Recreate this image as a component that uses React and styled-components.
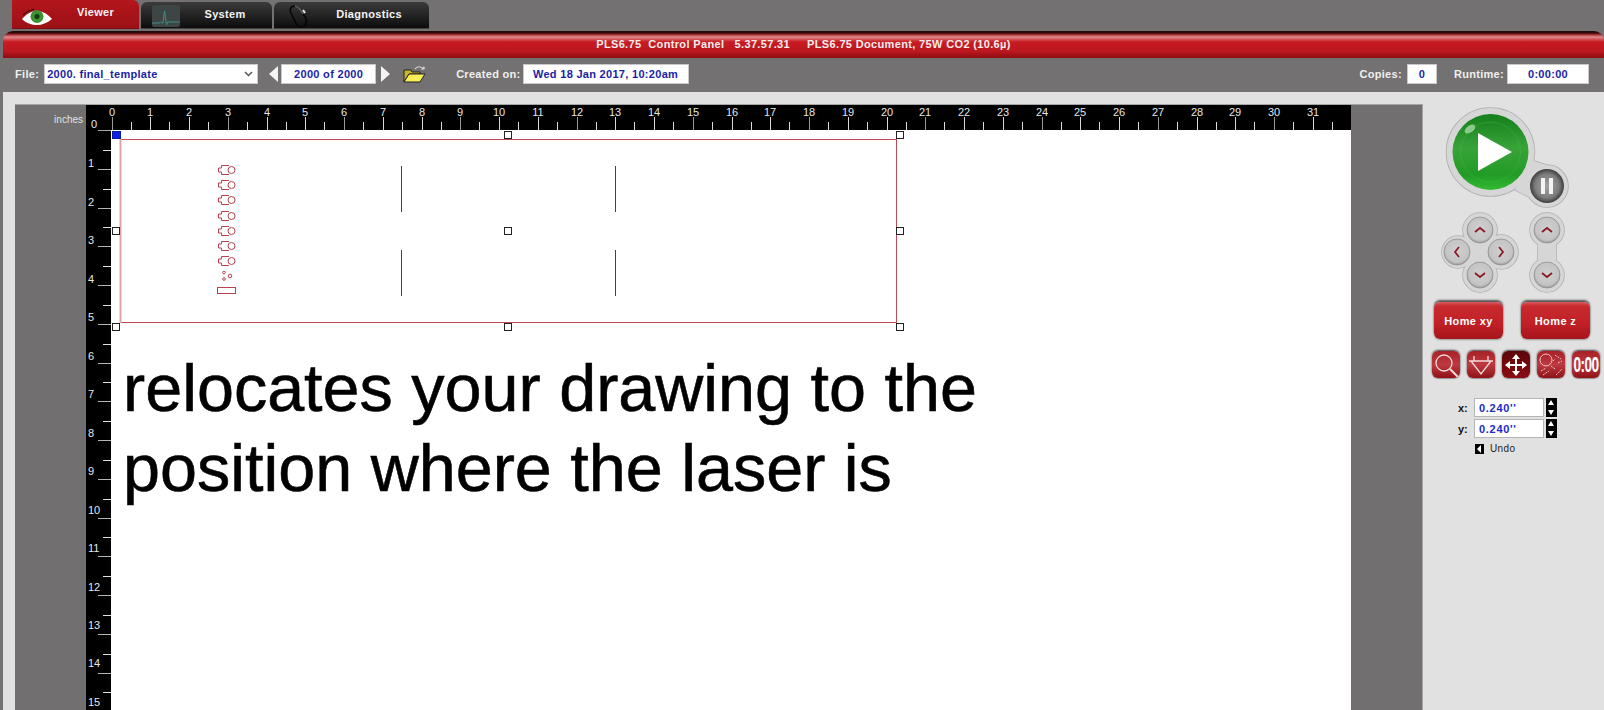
import React from "react";
import styled, { createGlobalStyle } from "styled-components";

const INCH = 38.75;

const GlobalStyle = createGlobalStyle`
  html, body {
    margin: 0;
    padding: 0;
    background: #737171;
    overflow: hidden;
  }
  * {
    box-sizing: border-box;
  }
`;

export default function App() {
  return (
    <Page>
      <GlobalStyle />
      <TabBar>
        <Tab $active $w={127}>
          <EyeIcon />
          <TabLabel $active $left={40}>Viewer</TabLabel>
        </Tab>
        <Tab $w={131}>
          <MonitorIcon />
          <TabLabel $left={37}>System</TabLabel>
        </Tab>
        <Tab $w={155}>
          <StethoscopeIcon />
          <TabLabel $left={35}>Diagnostics</TabLabel>
        </Tab>
      </TabBar>
      <TitleBar>PLS6.75&nbsp; Control Panel&nbsp;&nbsp; 5.37.57.31&nbsp;&nbsp;&nbsp;&nbsp; PLS6.75 Document, 75W CO2 (10.6µ)</TitleBar>
      <ToolBar>
        <FieldLabel>File:</FieldLabel>
        <SelectBox>
          <span>2000. final_template</span>
          <svg width="9" height="6" viewBox="0 0 9 6">
            <path d="M1 1l3.500 3.500L8 1" fill="none" stroke="#555" strokeWidth="1.500" />
          </svg>
        </SelectBox>
        <Arrow $left $gap={11} />
        <ValueBox $w={95} $gap={3}>2000 of 2000</ValueBox>
        <Arrow $gap={5} />
        <FolderIcon />
        <FieldLabel $gap={30}>Created on:</FieldLabel>
        <ValueBox $w={166} $gap={2}>Wed 18 Jan 2017, 10:20am</ValueBox>
        <Spacer />
        <FieldLabel>Copies:</FieldLabel>
        <ValueBox $w={30} $gap={5}>0</ValueBox>
        <FieldLabel $gap={17}>Runtime:</FieldLabel>
        <ValueBox $w={82} $gap={3}>0:00:00</ValueBox>
      </ToolBar>
      <Workspace>
        <CanvasFrame>
          <Gutter>inches</Gutter>
          <RulerGrid>
            <TopRuler />
            <SheetRow>
              <LeftRuler />
              <Sheet>
                <Drawing />
                <Caption>
                  relocates your drawing to the
                  <br />
                  position where the laser is
                </Caption>
              </Sheet>
            </SheetRow>
          </RulerGrid>
        </CanvasFrame>
        <SidePanel>
          <MotionControls />
          <HomeRow>
            <HomeButton>Home xy</HomeButton>
            <HomeButton>Home z</HomeButton>
          </HomeRow>
          <ToolRow>
            <ToolButton>
              <svg width="26" height="26" viewBox="0 0 26 26" fill="none" stroke="#f3dcdc" strokeWidth="1.300">
                <circle cx="11" cy="11" r="8" />
                <path d="M17 17l8 8" strokeWidth="2" />
              </svg>
            </ToolButton>
            <ToolButton>
              <svg width="26" height="26" viewBox="0 0 26 26" fill="none" stroke="#f3dcdc" strokeWidth="1.300">
                <path d="M1 9h24M6 9V4M20 9V4M3 9l10 13L23 9" />
              </svg>
            </ToolButton>
            <ToolButton $active>
              <svg width="24" height="24" viewBox="0 0 24 24" fill="#fff">
                <path d="M12 1l4 5h-3v5h5V8l5 4-5 4v-3h-5v5h3l-4 5-4-5h3v-5H6v3l-5-4 5-4v3h5V6H8z" />
              </svg>
            </ToolButton>
            <ToolButton>
              <svg width="26" height="26" viewBox="0 0 26 26" fill="none" stroke="#ecc6c6" strokeWidth="1">
                <circle cx="8" cy="8" r="6" />
                <path d="M17 3l6 4M20 11l4-2M3 19l5-3M5 23l6-4M13 14l4 3M18 23l6-6M15 9l2-2" strokeDasharray="2 1" />
              </svg>
            </ToolButton>
            <ToolButton><TimerText>0:00</TimerText></ToolButton>
          </ToolRow>
          <CoordRow $gap={20}>
            <CoordLabel>x:</CoordLabel>
            <CoordInput>0.240''</CoordInput>
            <Spinner />
          </CoordRow>
          <CoordRow $gap={2}>
            <CoordLabel>y:</CoordLabel>
            <CoordInput>0.240''</CoordInput>
            <Spinner />
          </CoordRow>
          <UndoRow>
            <UndoMark />
            Undo
          </UndoRow>
        </SidePanel>
      </Workspace>
    </Page>
  );
}

function EyeIcon() {
  return (
    <TabIcon $left={9} $top={8}>
      <svg width="32" height="18" viewBox="0 0 32 18">
        <path d="M1 11C7 4 12 3 16 3s10 2 15 8c-5 4-10 6-15 6S5 15 1 11z" fill="#fff" />
        <circle cx="16" cy="8.500" r="6.500" fill="#3f8f33" />
        <circle cx="16" cy="8.500" r="2.500" fill="#123d12" />
        <path d="M2 7l4-3M6 4l3-2M9 3l4-2" stroke="#2a0505" strokeWidth="1" />
      </svg>
    </TabIcon>
  );
}

function MonitorIcon() {
  return (
    <TabIcon $left={11} $top={3}>
      <svg width="28" height="22" viewBox="0 0 28 22">
        <rect width="28" height="22" rx="2" fill="#3d4644" />
        <path d="M0 18h7l1.500-1 1.500 1h1l1.500-12 2 14 1-3h12.500" fill="none" stroke="#3f8f88" strokeWidth="1" />
      </svg>
    </TabIcon>
  );
}

function StethoscopeIcon() {
  return (
    <TabIcon $left={14} $top={3}>
      <svg width="20" height="24" viewBox="0 0 20 24" fill="none" stroke="#050505" strokeWidth="1.500">
        <path d="M7 1C3 1 1 4 3 8l6 12c2 3 7 3 9-1 1-3 0-7-3-10" />
        <path d="M7 1c4 1 6 4 8 8" stroke="#5a5a5a" />
        <path d="M15 5l2 3" stroke="#e8e8e8" strokeWidth="2" />
      </svg>
    </TabIcon>
  );
}

function FolderIcon() {
  return (
    <FolderWrap>
      <svg width="23" height="18" viewBox="0 0 23 18">
        <path d="M1 5h7l1 2h8v2H6L1 17z" fill="#c9b52a" stroke="#222" strokeWidth="1" />
        <path d="M1 17L6 9h16l-5 8z" fill="#f8ee55" stroke="#222" strokeWidth="1" />
        <path d="M12 4c2-3 6-3 8 0" fill="none" stroke="#ddd" strokeWidth="1.200" />
        <path d="M18 5l4-1-1-3z" fill="#ddd" />
      </svg>
    </FolderWrap>
  );
}

function TopRuler() {
  const ticks = [];
  for (let i = 0; i <= 32; i++) {
    const x = Math.round(111.7 + i * INCH);
    ticks.push(
      <g key={i}>
        {i < 32 && (
          <text x={x} y={116} textAnchor="middle" fill="#e6e6e6" fontSize="11" fontFamily="Liberation Sans, sans-serif">
            {i}
          </text>
        )}
        <line x1={x + 0.5} x2={x + 0.5} y1={117} y2={130} stroke={i % 3 ? "#d8d8d8" : "#9a9a9a"} />
        <line
          x1={Math.round(x + INCH / 2) + 0.5}
          x2={Math.round(x + INCH / 2) + 0.5}
          y1={122}
          y2={130}
          stroke="#dcdcdc"
        />
      </g>
    );
  }
  return (
    <RulerSvg width="1265" height="25" viewBox="86 105 1265 25">
      <rect x="86" y="105" width="1265" height="25" fill="#000" />
      {ticks}
      <text x="91" y="128" fill="#e6e6e6" fontSize="11" fontFamily="Liberation Sans, sans-serif">0</text>
    </RulerSvg>
  );
}

function LeftRuler() {
  const ticks = [];
  ticks.push(<line key="zero" x1="98" x2="111" y1="130.500" y2="130.500" stroke="#aaa" />);
  for (let i = 1; i <= 15; i++) {
    const y = Math.round(130 + i * INCH);
    ticks.push(
      <g key={i}>
        <text x={88} y={Math.round(129 + i * 38.46)} fill="#e6e6e6" fontSize="11" fontFamily="Liberation Sans, sans-serif">
          {i}
        </text>
        {i < 15 && <line x1="98" x2="111" y1={y + 0.5} y2={y + 0.5} stroke="#b5b5b5" />}
        <line x1="103" x2="111" y1={Math.round(y - INCH / 2) + 0.5} y2={Math.round(y - INCH / 2) + 0.5} stroke="#e0e0e0" />
      </g>
    );
  }
  return (
    <RulerSvg width="25" height="580" viewBox="86 130 25 580">
      <rect x="86" y="130" width="25" height="580" fill="#000" />
      {ticks}
    </RulerSvg>
  );
}

const handleSpots = [
  [508, 135],
  [900, 135],
  [116, 231],
  [508, 231],
  [900, 231],
  [116, 327],
  [508, 327],
  [900, 327],
];

const partRows = [170, 185, 200, 216, 231, 246, 261];

function Drawing() {
  return (
    <DrawingSvg width="800" height="205" viewBox="111 130 800 205">
      <rect x="120.500" y="139.500" width="776" height="183" fill="none" stroke="#c04a55" />
      <line x1="120.500" x2="120.500" y1="139" y2="323" stroke="#dba6aa" strokeWidth="2" />
      {[401.5, 615.5].map((x) => (
        <g key={x} stroke="#2f3da0">
          <line x1={x} x2={x} y1="166" y2="212" />
          <line x1={x} x2={x} y1="250" y2="296" />
        </g>
      ))}
      {partRows.map((y) => (
        <g key={y} fill="none" stroke="#b8434e" transform={`translate(0 ${y})`}>
          <path d="M229-4.500h-7.500v2.500h-3v4h3v2.500h7.500" />
          <circle cx="231.500" cy="0" r="3.500" />
        </g>
      ))}
      <g fill="none" stroke="#b8434e">
        <circle cx="224" cy="272.500" r="1.300" />
        <circle cx="224" cy="279" r="1.300" />
        <circle cx="230" cy="276" r="1.800" />
        <rect x="217.500" y="287.500" width="18" height="6" />
      </g>
      <rect x="112.500" y="131.500" width="8" height="7" fill="#0c20e8" stroke="#0b1a9a" />
      {handleSpots.map(([x, y]) => (
        <rect key={`${x}-${y}`} x={x - 3.5} y={y - 3.5} width="7" height="7" fill="#fff" stroke="#222" />
      ))}
    </DrawingSvg>
  );
}

function MotionButton({ x, y, d }) {
  return (
    <g>
      <circle cx={x} cy={y} r="13" fill="url(#steel)" stroke="#8f8f8f" strokeWidth="0.800" />
      <path d={`M${x} ${y}${d}`} fill="none" stroke="#8a1c26" strokeWidth="1.800" />
    </g>
  );
}

const UP = "m-5 2l5-4 5 4";
const DOWN = "m-5-2l5 4 5-4";
const LEFT = "m2-5l-4 5 4 5";
const RIGHT = "m-2-5l4 5-4 5";

// halo shapes behind the buttons, drawn twice to get one outer edge
function Halos(props) {
  return (
    <g {...props}>
      <circle cx="1490.500" cy="152" r="44" />
      <circle cx="1547" cy="186" r="21" />
      <path d="M1530 160l17 5-12 35-20-10z" />
      <path d="M1480 232l21 20-21 23-23-23z" />
      <circle cx="1480" cy="230" r="17" />
      <circle cx="1480" cy="275" r="17" />
      <circle cx="1458" cy="252" r="16" />
      <circle cx="1501" cy="252" r="17" />
      <path d="M1538 235h18v35h-18z" />
      <circle cx="1547" cy="230" r="17" />
      <circle cx="1547" cy="275" r="17" />
    </g>
  );
}

function MotionControls() {
  return (
    <MotionSvg width="181" height="190" viewBox="1423 104 181 190">
      <defs>
        <linearGradient id="ball" x1="0" y1="0" x2="0" y2="1">
          <stop offset="0" stopColor="#157f1c" />
          <stop offset="0.45" stopColor="#38a338" />
          <stop offset="0.8" stopColor="#229b26" />
          <stop offset="1" stopColor="#33bb33" />
        </linearGradient>
        <radialGradient id="steel" cx="50%" cy="45%" r="55%">
          <stop offset="0" stopColor="#d0d0d0" />
          <stop offset="0.8" stopColor="#c4c4c4" />
          <stop offset="1" stopColor="#9a9a9a" />
        </radialGradient>
        <radialGradient id="pause" cx="50%" cy="50%" r="50%">
          <stop offset="0" stopColor="#a4a4a4" />
          <stop offset="0.7" stopColor="#7d7d7d" />
          <stop offset="1" stopColor="#3e3e3e" />
        </radialGradient>
      </defs>
      <Halos fill="#b0b0b0" stroke="#b0b0b0" strokeWidth="1.500" />
      <Halos fill="#d6d6d6" />
      <circle cx="1490.500" cy="152" r="38" fill="url(#ball)" />
      <ellipse cx="1470" cy="129" rx="6" ry="3.500" fill="#a9d9a6" opacity="0.8" transform="rotate(-35 1470 129)" />
      <circle cx="1490.500" cy="152" r="30" fill="none" stroke="#52c052" strokeWidth="0.600" opacity="0.5" />
      <path d="M1478 133l34 19-34 19z" fill="#fff" />
      <circle cx="1547" cy="186" r="17" fill="url(#pause)" />
      <path d="M1541 178h4v16h-4zM1549 178h4v16h-4z" fill="#f4f4f4" />
      <MotionButton x={1480} y={230} d={UP} />
      <MotionButton x={1457} y={252} d={LEFT} />
      <MotionButton x={1501} y={252} d={RIGHT} />
      <MotionButton x={1480} y={275} d={DOWN} />
      <MotionButton x={1547} y={230} d={UP} />
      <MotionButton x={1547} y={275} d={DOWN} />
    </MotionSvg>
  );
}

const Page = styled.div`
  width: 1604px;
  height: 710px;
  display: flex;
  flex-direction: column;
  overflow: hidden;
  background: #737171;
  font-family: "Liberation Sans", Arial, sans-serif;
`;

const TabBar = styled.div`
  height: 31px;
  padding-left: 12px;
  display: flex;
  align-items: flex-start;
  gap: 2px;
`;

const Tab = styled.div`
  position: relative;
  width: ${(p) => p.$w}px;
  margin-top: ${(p) => (p.$active ? 0 : 2)}px;
  height: ${(p) => (p.$active ? 29 : 27)}px;
  display: flex;
  align-items: center;
  justify-content: center;
  border-radius: ${(p) => (p.$active ? "0 6px 0 0" : "6px 6px 0 0")};
  background: ${(p) =>
    p.$active
      ? "linear-gradient(#b3161c, #9c1116)"
      : "linear-gradient(#3b3b3b, #0d0d0d)"};
  border-bottom: 1px solid ${(p) => (p.$active ? "#7d0b10" : "#444")};
`;

const TabIcon = styled.div`
  position: absolute;
  left: ${(p) => p.$left}px;
  top: ${(p) => p.$top}px;
  line-height: 0;
`;

const TabLabel = styled.span`
  margin-left: ${(p) => p.$left}px;
  margin-top: ${(p) => (p.$active ? -4 : -3)}px;
  color: #f4f4f4;
  font-size: 11px;
  font-weight: 700;
  letter-spacing: 0.3px;
`;

const TitleBar = styled.div`
  margin-left: 3px;
  height: 27px;
  padding-top: 7px;
  border-radius: 10px 10px 0 0;
  background: linear-gradient(
    #1c0a0a 0,
    #3a0808 2px,
    #b73a3e 4px,
    #e08c8e 6px,
    #cf4347 9px,
    #c81a22 11px,
    #bd1820 20px,
    #8c0d11 27px
  );
  color: #f6eeee;
  font-size: 11px;
  font-weight: 700;
  letter-spacing: 0.35px;
  text-align: center;
  white-space: pre;
`;

const ToolBar = styled.div`
  height: 34px;
  padding: 0 15px 3px 15px;
  display: flex;
  align-items: center;
  background: #737171;
`;

const FieldLabel = styled.span`
  margin-left: ${(p) => p.$gap || 0}px;
  color: #f0f0f0;
  font-size: 11px;
  font-weight: 700;
  letter-spacing: 0.3px;
  white-space: nowrap;
`;

const SelectBox = styled.div`
  width: 214px;
  height: 20px;
  margin-left: 5px;
  padding: 0 4px 0 2px;
  display: flex;
  align-items: center;
  justify-content: space-between;
  background: #fff;
  border: 1px solid #c9c9c9;
  color: #1a1ea6;
  font-size: 11px;
  font-weight: 700;
  letter-spacing: 0.3px;
`;

const ValueBox = styled.div`
  width: ${(p) => p.$w}px;
  height: 20px;
  margin-left: ${(p) => p.$gap || 0}px;
  display: flex;
  align-items: center;
  justify-content: center;
  background: #fff;
  border: 1px solid #c9c9c9;
  color: #1a1ea6;
  font-size: 11px;
  font-weight: 700;
  letter-spacing: 0.3px;
  white-space: nowrap;
`;

const Arrow = styled.div`
  width: 0;
  height: 0;
  margin-left: ${(p) => p.$gap}px;
  border-top: 8px solid transparent;
  border-bottom: 8px solid transparent;
  border-right: ${(p) => (p.$left ? "9px solid #f4f4f4" : "0")};
  border-left: ${(p) => (p.$left ? "0" : "9px solid #f4f4f4")};
`;

const FolderWrap = styled.div`
  margin-left: 13px;
  line-height: 0;
`;

const Spacer = styled.div`
  flex: 1;
`;

const Workspace = styled.div`
  flex: 1;
  min-height: 0;
  margin-left: 3px;
  padding: 12px 0 0 12px;
  display: flex;
  background: #e2e1e1;
`;

const CanvasFrame = styled.div`
  width: 1408px;
  display: flex;
  padding-right: 72px;
  background: #716f6f;
  border-top: 1px solid #a5a5a5;
  border-right: 1px solid #a5a5a5;
  overflow: hidden;
`;

const Gutter = styled.div`
  width: 71px;
  flex: none;
  padding-top: 9px;
  padding-right: 3px;
  text-align: right;
  color: #e2e2e2;
  font-size: 10px;
`;

const RulerGrid = styled.div`
  width: 1265px;
  flex: none;
  display: flex;
  flex-direction: column;
`;

const RulerSvg = styled.svg`
  display: block;
  flex: none;
`;

const SheetRow = styled.div`
  flex: 1;
  display: flex;
  min-height: 0;
`;

const Sheet = styled.div`
  flex: 1;
  background: #fff;
`;

const DrawingSvg = styled.svg`
  display: block;
`;

const Caption = styled.div`
  margin-top: 13px;
  margin-left: 12px;
  color: #000;
  font-size: 66.5px;
  line-height: 80px;
  white-space: nowrap;
  -webkit-text-stroke: 0.6px #000;
`;

const SidePanel = styled.div`
  flex: 1;
  display: flex;
  flex-direction: column;
`;

const MotionSvg = styled.svg`
  display: block;
  flex: none;
`;

const HomeRow = styled.div`
  margin-top: 8px;
  padding-left: 11px;
  display: flex;
  gap: 18px;
`;

const HomeButton = styled.div`
  width: 69px;
  height: 37px;
  display: flex;
  align-items: center;
  justify-content: center;
  border-radius: 6px;
  background: linear-gradient(#d85a60 0, #c92a30 4px, #c02026 60%, #a5151b 100%);
  box-shadow: 0 -2px 2px #555, 0 1px 2px #999;
  color: #fff;
  font-size: 11px;
  font-weight: 700;
  letter-spacing: 0.4px;
`;

const ToolRow = styled.div`
  margin-top: 12px;
  padding-left: 9px;
  display: flex;
  gap: 7px;
`;

const ToolButton = styled.div`
  width: 28px;
  height: 27px;
  display: flex;
  align-items: center;
  justify-content: center;
  overflow: hidden;
  border-radius: 6px;
  background: ${(p) =>
    p.$active
      ? "linear-gradient(#5a0509, #8c0c12)"
      : "linear-gradient(#a82026, #bd3a40 50%, #8f1217)"};
  box-shadow: 0 -1px 2px #444, 0 1px 1px #999;
`;

const TimerText = styled.span`
  display: inline-block;
  color: #fff;
  font-size: 22px;
  font-weight: 700;
  letter-spacing: -1px;
  transform: scaleX(0.62);
  white-space: nowrap;
`;

const CoordRow = styled.div`
  margin-top: ${(p) => p.$gap}px;
  height: 19px;
  padding-left: 35px;
  display: flex;
  align-items: center;
`;

const CoordLabel = styled.span`
  width: 16px;
  color: #111;
  font-size: 11px;
  font-weight: 700;
`;

const CoordInput = styled.div`
  width: 70px;
  height: 19px;
  padding-left: 4px;
  display: flex;
  align-items: center;
  background: #fff;
  border: 1px solid #b5b5b5;
  color: #1a2ad0;
  font-size: 11px;
  font-weight: 700;
  letter-spacing: 0.7px;
`;

const Spinner = styled.div`
  width: 11px;
  height: 19px;
  margin-left: 2px;
  position: relative;
  background: #000;
  &::before,
  &::after {
    content: "";
    position: absolute;
    left: 2px;
    border-left: 3.5px solid transparent;
    border-right: 3.5px solid transparent;
  }
  &::before {
    top: 2px;
    border-bottom: 5px solid #fff;
  }
  &::after {
    bottom: 2px;
    border-top: 5px solid #fff;
  }
`;

const UndoRow = styled.div`
  margin-top: 5px;
  padding-left: 52px;
  display: flex;
  align-items: center;
  gap: 6px;
  color: #222;
  font-size: 10px;
  letter-spacing: 0.4px;
`;

const UndoMark = styled.div`
  width: 9px;
  height: 10px;
  position: relative;
  background: #000;
  &::after {
    content: "";
    position: absolute;
    left: 2px;
    top: 1px;
    border-top: 4px solid transparent;
    border-bottom: 4px solid transparent;
    border-right: 4px solid #fff;
  }
`;
